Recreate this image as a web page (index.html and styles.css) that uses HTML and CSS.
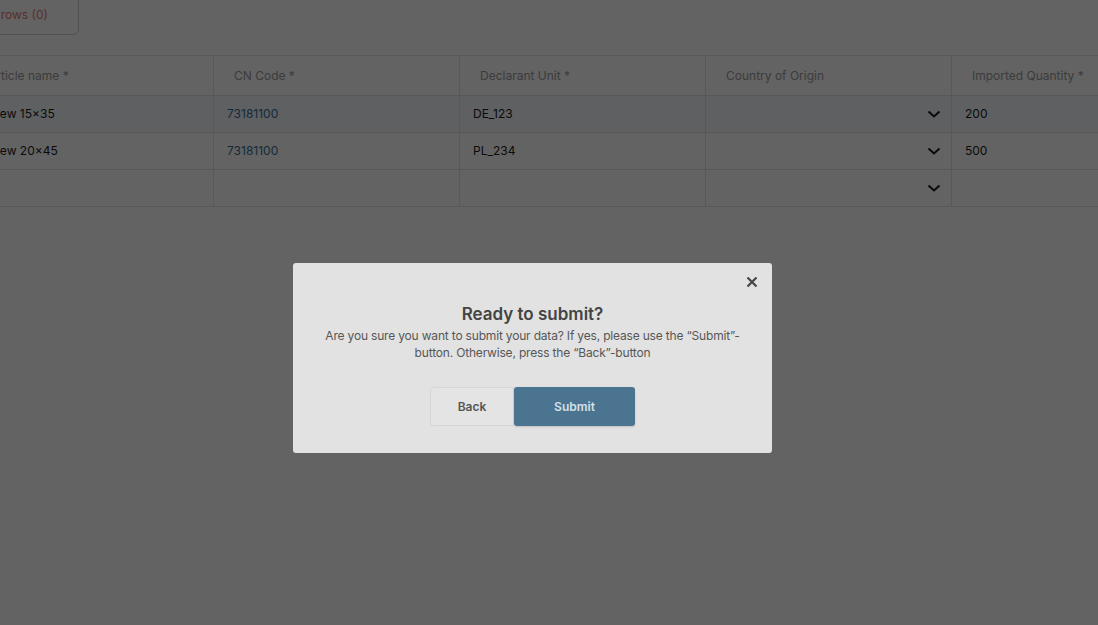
FILE: index.html
```html
<!DOCTYPE html>
<html>

<head>
    <title>Import Articles</title>
    <link rel="stylesheet" href="styles.css">
</head>

<body>
    <div class="page">
        <div class="toolbar">
            <button type="button" class="delete-button">Delete rows (0)</button>
        </div>

        <div class="grid">
            <div class="grid-row grid-head">
                <div class="cell">Article name *</div>
                <div class="cell">CN Code *</div>
                <div class="cell">Declarant Unit *</div>
                <div class="cell">Country of Origin</div>
                <div class="cell">Imported Quantity *</div>
            </div>
            <div class="grid-row selected">
                <div class="cell">Screw 15×35</div>
                <div class="cell code">73181100</div>
                <div class="cell">DE_123</div>
                <div class="cell select">
                    <svg class="chevron" viewBox="0 0 14 8"><path d="M1.5 1.5 7 6.5l5.5-5" /></svg>
                </div>
                <div class="cell">200</div>
            </div>
            <div class="grid-row">
                <div class="cell">Screw 20×45</div>
                <div class="cell code">73181100</div>
                <div class="cell">PL_234</div>
                <div class="cell select">
                    <svg class="chevron" viewBox="0 0 14 8"><path d="M1.5 1.5 7 6.5l5.5-5" /></svg>
                </div>
                <div class="cell">500</div>
            </div>
            <div class="grid-row">
                <div class="cell"></div>
                <div class="cell"></div>
                <div class="cell"></div>
                <div class="cell select">
                    <svg class="chevron" viewBox="0 0 14 8"><path d="M1.5 1.5 7 6.5l5.5-5" /></svg>
                </div>
                <div class="cell"></div>
            </div>
        </div>
    </div>

    <div class="backdrop"></div>

    <div class="modal" role="dialog">
        <button type="button" class="close-button" aria-label="Close">
            <svg viewBox="0 0 12 12"><path d="M1.5 1.5l9 9M10.5 1.5l-9 9" /></svg>
        </button>
        <h2 class="modal-title">Ready to submit?</h2>
        <p class="modal-text">Are you sure you want to submit your data? If yes, please use the “Submit”-button. Otherwise, press the “Back”-button</p>
        <div class="modal-actions">
            <button type="button" class="back-button">Back</button>
            <button type="button" class="submit-button">Submit</button>
        </div>
    </div>
</body>

</html>
```

FILE: styles.css
```css
body {
    font-family: Inter, "Noto Sans", sans-serif;
    background-color: #ffffff;
    margin: 0;
    padding: 0;
    overflow: hidden;
}

/* the table is scrolled sideways a little */
.page {
    margin-left: -56px;
    width: 1400px;
}

.toolbar {
    margin-top: -6px;
    height: 61px;
}

.delete-button {
    height: 41px;
    padding: 0 30px 0 16px;
    background: #ffffff;
    border: 1px solid #cfcfcf;
    border-radius: 5px;
    color: #e07a7a;
    font-family: inherit;
    font-size: 12px;
}

.grid {
    margin-left: 24px;
    border-top: 1px solid #e4e4e4;
    font-size: 12px;
}

.grid-row {
    display: grid;
    grid-template-columns: repeat(5, 246px);
    height: 37px;
    border-bottom: 1px solid #e2e2e2;
    box-sizing: border-box;
    color: #1c1c1c;
}

.grid-head {
    height: 40px;
    color: #9a9a9a;
}

.grid-head .cell {
    padding-left: 20px;
    padding-top: 1px;
}

.selected {
    background-color: #f1f6fb;
}

.cell {
    display: flex;
    align-items: center;
    padding-left: 13px;
    padding-bottom: 1px;
    border-right: 1px solid #e2e2e2;
}

.code {
    color: #356f98;
}

.select {
    justify-content: flex-end;
    padding-right: 10px;
}

.chevron {
    width: 14px;
    height: 8px;
    fill: none;
    stroke: #1a1a1a;
    stroke-width: 2;
}

.backdrop {
    position: fixed;
    inset: 0;
    background-color: rgba(0, 0, 0, 0.61);
}

.modal {
    position: absolute;
    left: 293px;
    top: 263px;
    width: 479px;
    height: 190px;
    box-sizing: border-box;
    padding: 40px 30px 0;
    background-color: #e2e2e2;
    border-radius: 3px;
    text-align: center;
}

.close-button {
    position: absolute;
    top: 13px;
    right: 14px;
    width: 12px;
    height: 12px;
    padding: 0;
    border: none;
    background: none;
    cursor: pointer;
}

.close-button svg {
    display: block;
    width: 12px;
    height: 12px;
    fill: none;
    stroke: #464646;
    stroke-width: 2.2;
}

.modal-title {
    margin: 0 0 2px;
    font-size: 17px;
    font-weight: 600;
    line-height: 22px;
    color: #444444;
}

.modal-text {
    margin: 0;
    font-size: 12px;
    line-height: 17px;
    letter-spacing: -0.18px;
    color: #575757;
}

.modal-actions {
    display: flex;
    justify-content: center;
    margin-top: 26px;
}

.back-button,
.submit-button {
    height: 39px;
    font-family: inherit;
    font-size: 12px;
    font-weight: 600;
    cursor: pointer;
}

.back-button {
    width: 84px;
    background-color: #e4e4e4;
    border: 1px solid #d6d6d6;
    border-radius: 3px 0 0 3px;
    color: #555555;
}

.submit-button {
    width: 121px;
    background-color: #4b7490;
    border: none;
    border-radius: 3px;
    color: #d4e0e8;
    box-shadow: 0 1px 2px rgba(0, 0, 0, 0.15);
}
```
